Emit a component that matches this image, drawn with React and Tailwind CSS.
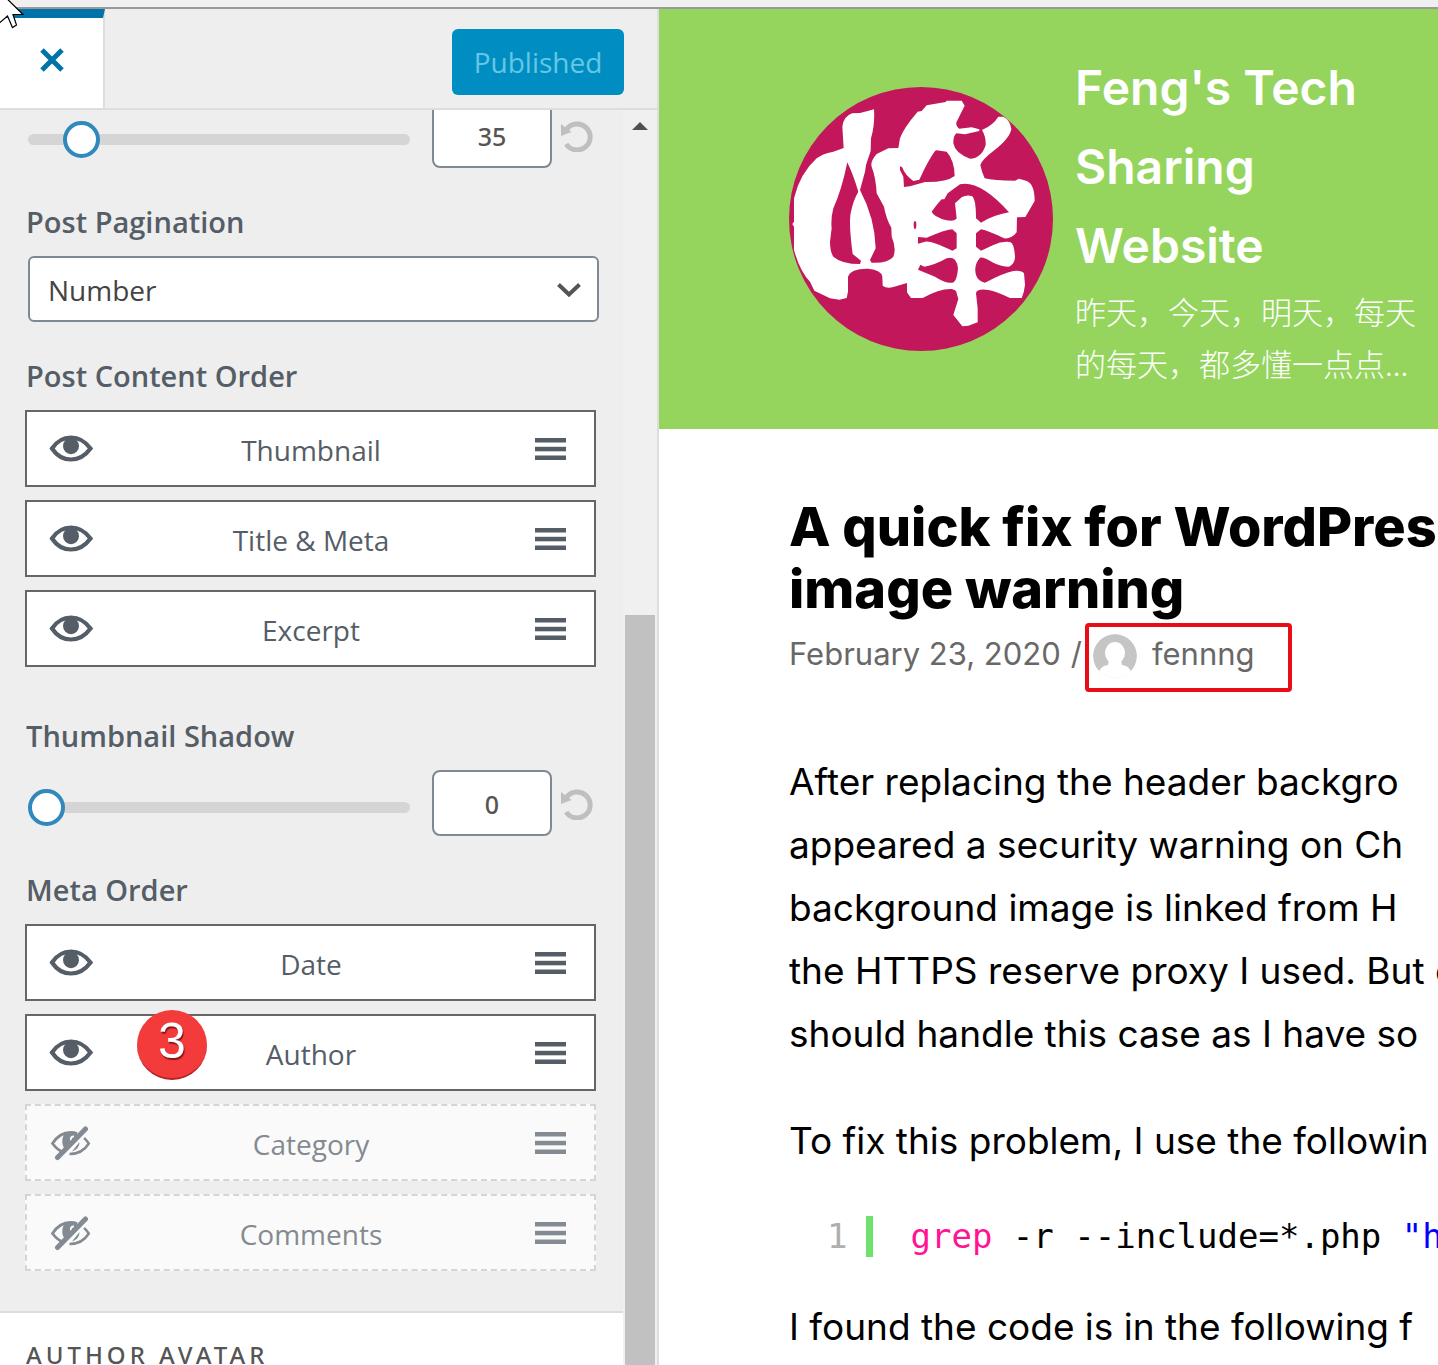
import { useState } from 'react';

const postContent = [
  { label: 'Thumbnail', visible: true },
  { label: 'Title & Meta', visible: true },
  { label: 'Excerpt', visible: true }
];

const metaOrder = [
  { label: 'Date', visible: true },
  { label: 'Author', visible: true, step: 3 },
  { label: 'Category', visible: false },
  { label: 'Comments', visible: false }
];

function EyeIcon() {
  return (
    <svg viewBox="0 0 44 28" className="w-11 h-7" fill="none" aria-hidden="true">
      <path
        d="M3 13.500C8 6 14 2.500 22 2.500S36 6 41.500 13.500C36 21 30 24.500 22 24.500S8 21 3 13.500Z"
        stroke="currentColor"
        strokeWidth="4.200"
      />
      <ellipse cx="22" cy="11" rx="8" ry="8.200" fill="currentColor" />
    </svg>
  );
}

function EyeOffIcon() {
  return (
    <svg viewBox="0 0 44 36" className="w-11 h-9" fill="none" aria-hidden="true">
      <path
        d="M15 27.500C10 26 6.500 22.500 3.500 18.500C8 11.500 14 7.500 21.500 7.500C24 7.500 26 7.800 28 8.600"
        stroke="currentColor"
        strokeWidth="2.800"
      />
      <path d="M35 13C37 14.500 38.500 16.500 39.800 18.500C35.500 25.500 29.500 29 20.500 29" stroke="currentColor" strokeWidth="2.500" />
      <path d="M21.500 7C15 7 13 12 13.300 17.500C13.600 21 15 23.500 17.500 25L30 11C28 8.500 25 7 21.500 7Z" fill="currentColor" />
      <path d="M22 15.500C21.500 12.500 22.500 11.500 25 11.500" stroke="#fafafa" strokeWidth="2" />
      <path d="M30.500 17C30.500 21.500 27.500 25 23 26.500Z" fill="currentColor" />
      <path d="M11 32.500L38 5.500" stroke="#fafafa" strokeWidth="6" />
      <path d="M8.500 32.500L36.500 4" stroke="currentColor" strokeWidth="5" strokeLinecap="round" />
    </svg>
  );
}

function MenuIcon() {
  return (
    <svg viewBox="0 0 31 22" className="w-[31px] h-[22px]" fill="currentColor" aria-hidden="true">
      <rect width="31" height="4.500" />
      <rect y="8.800" width="31" height="4.500" />
      <rect y="17.500" width="31" height="4.500" />
    </svg>
  );
}

function ResetIcon() {
  return (
    <svg viewBox="0 0 32 32" className="w-8 h-8" fill="none" aria-hidden="true">
      <path d="M5.500 9.500A13 13 0 1 1 5.200 24" stroke="#bfbfbf" strokeWidth="5" />
      <path d="M0 4L10.500 12L0 16Z" fill="#bfbfbf" />
    </svg>
  );
}

function SiteLogo() {
  return (
    <svg viewBox="27 36 792 792" className="w-66 h-66 shrink-0" role="img" aria-label="Site logo">
      <circle cx="423" cy="432" r="396" fill="#c2185b" />
      <path
        fill="#fff"
        d="M282 103L266 107L240 114L216 115Q190 125 187 155L191 219L160 230Q125 237 110 250Q60 295 42 370L42 440L37 447L42 455L42 525Q60 590 90 620L103 647L150 670L178 674L200 669L204 650L204 605Q212 580 265 581Q305 585 307 605L308 632Q320 642 340 636L381 624L381 652L393 669L428 669Q480 640 515 642Q530 645 530 655L535 672L520 720L547 754L565 752L593 742L593 700L588 655Q590 640 625 645Q650 650 690 669L725 669Q733 650 735 630L732 595Q725 585 700 588Q670 594 615 623Q595 620 588 600Q580 570 600 548Q610 545 640 563Q665 575 687 575Q705 565 705 545Q703 505 690 501Q665 498 640 510L603 527L588 515L588 475L603 463Q625 467 672 490Q695 492 710 472L711 427L736 426L764 378Q764 325 738 317L717 311L705 317Q640 317 614 310Q605 290 601 270Q605 255 640 228Q690 190 694 162Q690 135 670 125L655 125Q640 150 606 165Q618 185 617 210Q605 250 570 251Q525 235 520 205Q520 180 530 175L555 178L598 168L598 163L575 157L537 161Q525 150 530 140Q545 110 554 92L545 77L500 77L497 81L440 91L425 108L413 110Q370 160 360 190L355 219L325 220L290 237Q270 260 275 275Q288 310 290 355L312 395Q318 430 334 458L335 485Q350 520 340 545Q325 565 275 563L270 555L287 520Q285 430 240 345L255 290L258 270L272 228L273 190Q285 150 282 103Z"
      />
      <g fill="#c2185b">
        <path d="M202 262Q185 345 160 400Q152 430 155 460L150 500Q150 530 160 545Q185 567 240 567L243 557L218 537Q205 440 213 410Q220 375 235 350Q220 300 202 262Z" />
        <path d="M470 226L500 230Q523 255 524 303Q500 322 435 321L390 334L372 336L370 305L360 285L360 274L366 276Q375 300 400 318L418 314Q445 255 465 228Z" />
        <path d="M455 410Q475 383 485 373L493 373L503 355L540 328Q600 315 687 412Q640 420 603 443L588 430Q588 370 575 363Q560 358 545 367L525 385L530 430Q525 440 500 436Q460 425 455 410Z" />
        <path d="M414 486L440 488Q500 463 517 463L530 475L530 520L517 527Q450 495 435 500L414 506Z" />
        <path d="M421 569L433 575Q465 570 500 550Q530 540 534 580Q530 625 515 623Q495 625 465 605L414 584Z" />
        <ellipse cx="405" cy="450" rx="4" ry="12" />
      </g>
    </svg>
  );
}

function SectionLabel({ htmlFor, children }) {
  const Tag = htmlFor ? 'label' : 'h3';
  return (
    <Tag htmlFor={htmlFor} className="block px-[26px] mb-3.5 text-[29px] leading-10 font-semibold text-[#555d66]">
      {children}
    </Tag>
  );
}

function SliderControl({ id, label, initial, max }) {
  const [value, setValue] = useState(initial);

  return (
    <div className="flex items-center pl-7 pr-[30px]">
      <div className="flex-1 pt-2 flex">
        <input
          id={id}
          type="range"
          aria-label={label}
          min="0"
          max={max}
          value={value}
          onChange={(e) => setValue(Number(e.target.value))}
          className="w-full h-[11px] appearance-none rounded-full bg-[#d5d5d5] [&::-webkit-slider-thumb]:appearance-none [&::-webkit-slider-thumb]:w-[37px] [&::-webkit-slider-thumb]:h-[37px] [&::-webkit-slider-thumb]:rounded-full [&::-webkit-slider-thumb]:border-4 [&::-webkit-slider-thumb]:border-[#3088bc] [&::-webkit-slider-thumb]:bg-white"
        />
      </div>
      <input
        type="text"
        aria-label={`${label} value`}
        value={value}
        onChange={(e) => setValue(Number(e.target.value) || 0)}
        className="w-[120px] h-[66px] pt-0.5 ml-[22px] rounded-lg border-2 border-[#7e8993] bg-white text-center font-['Noto_Sans',sans-serif] text-[25px] font-medium text-[#555]"
      />
      <button type="button" aria-label={`Reset ${label}`} onClick={() => setValue(initial)} className="ml-[9px] pt-0.5">
        <ResetIcon />
      </button>
    </div>
  );
}

function SortableList({ items }) {
  return (
    <ul className="flex flex-col gap-[13px] pl-[25px] pr-[27px]">
      {items.map((item) => (
        <li
          key={item.label}
          className={`relative flex items-center h-[77px] pl-[22px] pr-7 border-2 ${
            item.visible
              ? 'bg-white border-[#666] text-[#555d66]'
              : 'bg-[#fafafa] border-dashed border-[#d5d5d5] text-[#848a91]'
          }`}
        >
          <button type="button" aria-label={`Toggle ${item.label}`} className="w-11">
            {item.visible ? <EyeIcon /> : <EyeOffIcon />}
          </button>
          <span className="flex-1 pt-0.5 pr-1.5 text-center text-[28px] leading-10">{item.label}</span>
          <MenuIcon />
          {item.step && (
            <span className="absolute left-[110px] -top-1.5 size-[70px] rounded-full bg-[#f33b3c] border-b-2 border-[#b52226] text-center font-['Liberation_Sans'] text-[50px] leading-[62px] text-white [text-shadow:1px_2px_1px_#8a1518]">
              {item.step}
            </span>
          )}
        </li>
      ))}
    </ul>
  );
}

function Customizer() {
  return (
    <aside className="w-[659px] shrink-0 flex flex-col border-r-2 border-[#ddd] bg-[#eee] font-['Open_Sans',sans-serif]">
      <div className="shrink-0 flex items-center justify-between h-[101px] pr-[33px] border-b-2 border-[#ddd]">
        <button
          type="button"
          aria-label="Close"
          className="w-[105px] self-stretch flex items-center justify-center pb-1.5 bg-white border-t-9 border-t-[#0073aa] border-r-2 border-r-[#ddd] text-[#0073aa]"
        >
          <svg viewBox="0 0 24 24" className="size-6" stroke="currentColor" strokeWidth="5" aria-hidden="true">
            <path d="M2 2L22 22M22 2L2 22" />
          </svg>
        </button>
        <button type="button" className="w-[172px] h-[66px] mt-1.5 rounded-md bg-[#008ec2] text-[28px] text-[#66c6e4]">
          Published
        </button>
      </div>

      <div className="flex-1 min-h-0 flex">
        <div className="flex-1 overflow-hidden">
          <div className="-mt-2 pb-10 border-b-2 border-[#ddd]">
            <SliderControl id="excerpt-length" label="Excerpt Length" initial={35} max={345} />
            <div className="mt-[34px]">
              <SectionLabel htmlFor="pagination">Post Pagination</SectionLabel>
              <div className="relative pl-7 pr-6">
                <select
                  id="pagination"
                  className="block w-full h-[66px] pt-0.5 pl-[18px] appearance-none rounded-md border-2 border-[#7e8993] bg-white text-[28px] text-[#444]"
                >
                  <option>Number</option>
                </select>
                <svg
                  viewBox="0 0 24 14"
                  className="absolute right-[42px] top-[27px] w-6 h-3.5 pointer-events-none"
                  fill="none"
                  stroke="#555"
                  strokeWidth="4"
                  aria-hidden="true"
                >
                  <path d="M1.500 1.500L12 11.500L22.500 1.500" />
                </svg>
              </div>
            </div>
            <div className="mt-[34px]">
              <SectionLabel>Post Content Order</SectionLabel>
              <SortableList items={postContent} />
            </div>
            <div className="mt-[49px]">
              <SectionLabel htmlFor="shadow">Thumbnail Shadow</SectionLabel>
              <SliderControl id="shadow" label="Thumbnail Shadow" initial={0} max={5} />
            </div>
            <div className="mt-[34px]">
              <SectionLabel>Meta Order</SectionLabel>
              <SortableList items={metaOrder} />
            </div>
          </div>
          <div className="h-24 px-[26px] pt-6 bg-white">
            <h3 className="font-['Noto_Sans',sans-serif] text-2xl leading-9 font-medium tracking-[4px] text-[#555]">
              AUTHOR AVATAR
            </h3>
          </div>
        </div>

        {/* Scrollbar */}
        <div className="w-[34px] shrink-0 flex flex-col px-[2px] bg-[#f0f0f0]">
          <svg viewBox="0 0 30 30" className="w-[30px] h-[30px]" fill="#505050" aria-hidden="true">
            <path d="M15 12L23 20H7Z" />
          </svg>
          <div className="flex-1 mt-[475px] bg-[#c1c1c1]" />
        </div>
      </div>
    </aside>
  );
}

function Preview() {
  return (
    <main className="flex-1 min-w-0 overflow-hidden bg-white font-['Inter',sans-serif]">
      <header className="flex items-center gap-[22px] pl-[130px] pt-[39px] pb-10 bg-[#95d55e] text-white">
        <SiteLogo />
        <div>
          <h1 className="max-w-72 text-5xl leading-[79px] font-semibold">
            <a href="#home">Feng's Tech Sharing Website</a>
          </h1>
          <p className="text-[31px] leading-[52px] font-light font-['Noto_Sans_CJK_SC',serif] whitespace-nowrap">
            昨天，今天，明天，每天
            <br />
            的每天，都多懂一点点...
          </p>
        </div>
      </header>

      <article className="pl-[130px] pt-[67px] whitespace-nowrap text-[37px] leading-[63px] text-black">
        <h2 className="text-[54px] leading-[62px] font-extrabold">
          A quick fix for WordPres
          <br />
          image warning
        </h2>
        <div className="flex items-center h-[69px] mt-[3px] text-[31px] text-[#686868]">
          <time dateTime="2020-02-23" className="pb-2">February 23, 2020</time>
          <span className="ml-2.5 pb-2">/</span>
          <a href="#author" className="flex items-center h-full w-[207px] ml-[3px] pl-1 rounded border-4 border-[#e80e18]">
            <svg viewBox="0 0 44 44" className="size-11 mb-1 rounded-full" aria-hidden="true">
              <circle cx="22" cy="22" r="22" fill="#c5c5c5" />
              <ellipse cx="22" cy="19" rx="10" ry="11" fill="#fff" />
              <path d="M16 26H28L29 31C36 32 39 36 39 44H5C5 36 8 32 15 31Z" fill="#fff" />
            </svg>
            <span className="ml-[15px] pb-2">fennng</span>
          </a>
        </div>
        <p className="mt-[58px]">
          After replacing the header backgro
          <br />
          appeared a security warning on Ch
          <br />
          background image is linked from H
          <br />
          the HTTPS reserve proxy I used. But o
          <br />
          should handle this case as I have so
        </p>
        <p className="mt-11">To fix this problem, I use the followin</p>
        <pre className="flex mt-11 pl-[38px] font-['DejaVu_Sans_Mono',monospace] text-[34px] leading-[41px]">
          <span className="pr-[19px] text-[#afafaf]">1</span>
          <code className="pl-[37px] border-l-[7px] border-[#6ce26c] font-['DejaVu_Sans_Mono',monospace]">
            <span className="text-[#ff1493]">grep</span> -r --include=*.php <span className="text-[#0000ff]">"h</span>
          </code>
        </pre>
        <p className="mt-[38px]">I found the code is in the following f</p>
      </article>
    </main>
  );
}

export default function App() {
  return (
    <div className="relative h-screen flex flex-col overflow-hidden">
      <div className="shrink-0 h-[9px] bg-[#f0f0f0] border-b-2 border-[#999]" />
      <div className="flex-1 min-h-0 flex">
        <Customizer />
        <Preview />
      </div>
      {/* Mouse pointer */}
      <svg viewBox="0 0 25 29" className="absolute left-0 top-0 w-[25px] h-[29px]" aria-hidden="true">
        <path
          d="M-6 -14L23 14.500H13L16.500 25L12.500 27.500L7.500 16L-4 26Z"
          fill="#fff"
          stroke="#000"
          strokeWidth="1.200"
        />
      </svg>
    </div>
  );
}
